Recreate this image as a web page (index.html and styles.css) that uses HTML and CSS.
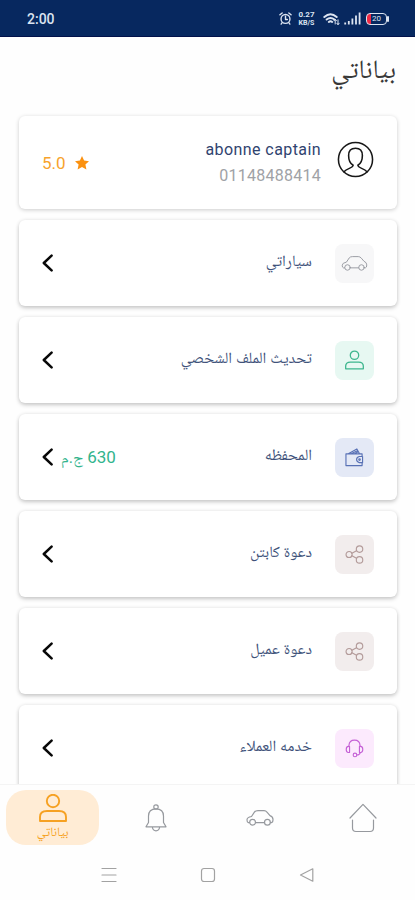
FILE: index.html
```html
<!DOCTYPE html>
<html lang="ar" dir="rtl">
<head>
<meta charset="utf-8">
<title>بياناتي</title>
<link rel="stylesheet" href="styles.css">
</head>
<body>
<svg class="defs" aria-hidden="true">
  <symbol id="car" viewBox="0 0 28 18"><path d="M3.5 13.6H2.2Q1 13.4 1 10.8Q1 8.4 5.5 7.5L8.4 3.1Q9.4 1.7 12 1.7H18Q19.8 1.7 21.2 3.3L24 6.6Q27 7.8 27 10.5Q27 13.4 25.5 13.6H24.5M9.5 13.6H18.5"/><circle cx="6.6" cy="13.2" r="2.9"/><circle cx="21.4" cy="13.2" r="2.9"/></symbol>
  <symbol id="person" viewBox="0 0 28 28"><circle cx="14" cy="7" r="6.2"/><path d="M1 27V23Q1 17 8 17H20Q27 17 27 23V27Z"/></symbol>
  <symbol id="share" viewBox="0 0 20 20"><circle cx="4.3" cy="10" r="3.2"/><circle cx="15.3" cy="4.3" r="3.4"/><circle cx="15.3" cy="15.7" r="3.4"/><path d="M7.3 8.8L12.1 6M7.3 11.2L12.1 14"/></symbol>
  <symbol id="chevron" viewBox="0 0 11 18"><path d="M9.6 1.6L1.8 9L9.6 16.4"/></symbol>
</svg>
<header class="status" dir="ltr">
  <span class="clock">2:00</span>
  <div class="indicators">
    <svg class="alarm" viewBox="0 0 14 14"><circle cx="7" cy="7.5" r="4.8"/><path d="M7 4.5V8H9M1 3L3.4 1M13 3L10.6 1M3.4 11.5L2.3 13M10.6 11.5L11.7 13"/></svg>
    <span class="speed"><b>0.27</b><b>KB/S</b></span>
    <svg class="wifi" viewBox="0 0 17 14"><path d="M1.3 5Q7.5 -.7 13.7 5M3.6 7.6Q7.5 4.4 11.4 7.6M5.8 10Q7.5 8.6 9.2 10"/><path class="fine" d="M12.2 12V7.5M10.9 8.8L12.2 7.3L13.5 8.8M15 7.8V12.5M13.8 11.2L15 12.7L16.2 11.2"/></svg>
    <svg class="signal" viewBox="0 0 17 13"><path d="M1.2 12.5V10.5M4.8 12.5V9M8.4 12.5V6.5M12 12.5V3.5M15.6 12.5V.5"/></svg>
    <span class="battery">20</span>
  </div>
</header>
<main class="screen">
  <h1 class="title">بياناتي</h1>
  <section class="cards">
    <article class="card profile">
      <svg class="avatar" viewBox="0 0 36 36"><circle cx="18" cy="18" r="16.6"/><path d="M15.7 23.6C12.6 21.7 11.3 18 11.3 14C11.3 9.6 13.8 7 18 7S24.7 9.6 24.7 14C24.7 18 23.4 21.7 20.3 23.6C20.7 26.6 26 26.3 29.2 30M15.7 23.6C15.3 26.6 10 26.3 6.8 30"/></svg>
      <div class="identity"><span class="name" dir="ltr">abonne captain</span><span class="phone" dir="ltr">01148488414</span></div>
      <div class="rating" dir="ltr"><span>5.0</span><svg viewBox="0 0 14 14"><path d="M7 0L9.1 4.6L14 5.2L10.4 8.6L11.4 13.5L7 11L2.6 13.5L3.6 8.6L0 5.2L4.9 4.6Z"/></svg></div>
    </article>
    <article class="card row">
      <span class="tile gray"><svg class="i-car"><use href="#car"/></svg></span>
      <span class="label">سياراتي</span>
      <svg class="chevron"><use href="#chevron"/></svg>
    </article>
    <article class="card row">
      <span class="tile green"><svg class="i-person"><use href="#person"/></svg></span>
      <span class="label wide">تحديث الملف الشخصي</span>
      <svg class="chevron"><use href="#chevron"/></svg>
    </article>
    <article class="card row">
      <span class="tile blue"><svg class="i-wallet" viewBox="0 0 20 20"><path d="M18 9V6.2H1V18.5H18V15.5M18.5 9H15Q12.2 9.8 12.2 12.2T15 15.4H18.5ZM3.5 6L12.5 1L15.3 6M7 5.8L13 3M10.5 5.8L13.8 4"/><circle cx="15.3" cy="12.2" r=".8"/></svg></span>
      <span class="label">المحفظه</span>
      <span class="balance"><span class="amount">630</span> ج.م</span>
      <svg class="chevron"><use href="#chevron"/></svg>
    </article>
    <article class="card row">
      <span class="tile rose"><svg class="i-share"><use href="#share"/></svg></span>
      <span class="label">دعوة كابتن</span>
      <svg class="chevron"><use href="#chevron"/></svg>
    </article>
    <article class="card row">
      <span class="tile rose"><svg class="i-share"><use href="#share"/></svg></span>
      <span class="label">دعوة عميل</span>
      <svg class="chevron"><use href="#chevron"/></svg>
    </article>
    <article class="card row">
      <span class="tile pink"><svg class="i-headset" viewBox="0 0 20 20"><path d="M4.2 8V6.5Q4.5 1.2 10 1.2T15.8 6.5V8M4.8 7.8V14.2H3.5Q1.3 14 1.3 11T3.5 7.8ZM15.2 7.8V14.2H16.5Q18.7 14 18.7 11T16.5 7.8ZM16 14.5Q15.5 16.6 12.5 16.8"/><circle cx="10.5" cy="16.8" r="1.9"/></svg></span>
      <span class="label">خدمه العملاء</span>
      <svg class="chevron"><use href="#chevron"/></svg>
    </article>
  </section>
</main>
<nav class="tabs">
  <span class="tab"><svg class="home" viewBox="0 0 28 30"><path d="M1 15L14 1.4L27 15M3.5 17V25Q3.5 28.5 7 28.5H21Q24.5 28.5 24.5 25V17"/></svg></span>
  <span class="tab"><svg class="tab-car"><use href="#car"/></svg></span>
  <span class="tab"><svg class="bell" viewBox="0 0 22 28"><path d="M1 22.8H21L18.5 18.5V12C18.5 7.5 16 4.8 11 4.8S3.5 7.5 3.5 12V18.5ZM7.3 23Q8 26.8 11 26.8T14.7 23"/><circle cx="11" cy="3" r="2.2"/></svg></span>
  <span class="tab"><span class="pill"><svg class="tab-person"><use href="#person"/></svg><span>بياناتي</span></span></span>
</nav>
<footer class="system">
  <svg viewBox="0 0 16 16"><path d="M13.8 1.8V14.2L1.5 8Z"/></svg>
  <svg viewBox="0 0 16 16"><rect x="1.5" y="1.5" width="13" height="13" rx="2.5"/></svg>
  <svg viewBox="0 0 16 16"><path d="M1 1.5H15M1 8H15M1 14.5H15"/></svg>
</footer>
</body>
</html>
```
FILE: styles.css
```css
* { box-sizing: border-box; }
body {
  margin: 0;
  height: 900px;
  overflow: hidden;
  display: flex;
  flex-direction: column;
  background: #fefefe;
  font-family: Roboto, "Noto Naskh Arabic", "Noto Sans Arabic", "DejaVu Sans", sans-serif;
}
svg { display: block; flex: none; fill: none; stroke: currentColor; stroke-width: 1.2; stroke-linejoin: round; stroke-linecap: round; }
.defs { width: 0; height: 0; position: absolute; }

.status {
  flex: none;
  height: 37px;
  padding: 0 24px 0 27px;
  display: flex;
  align-items: center;
  justify-content: space-between;
  background: #07285f;
  border-bottom: 1px solid #02114a;
  color: #dce4f1;
}
.clock { font-size: 14px; font-weight: 500; line-height: 16px; padding-top: 2px; }
.indicators { display: flex; align-items: center; padding-top: 1px; }
.alarm { width: 13px; height: 13px; margin-right: 5px; stroke-width: 1.5; }
.speed { width: 19px; margin-right: 7px; display: flex; flex-direction: column; align-items: center; font-size: 8px; line-height: 8px; }
.speed b { height: 8px; }
.speed b + b { font-size: 7px; line-height: 9px; }
.wifi { width: 17px; height: 14px; margin-right: 4px; stroke-width: 1.9; }
.wifi .fine { stroke-width: 1; }
.signal { width: 17px; height: 13px; margin-right: 5px; stroke-width: 1.8; stroke-linecap: butt; }
.battery {
  position: relative;
  width: 21px;
  height: 12px;
  margin-right: 4px;
  border: 1.5px solid #dce4f1;
  border-radius: 4px;
  background: linear-gradient(90deg, #ef2944 4px, transparent 4px);
  font-size: 8px;
  line-height: 10px;
  text-align: center;
}
.battery::after { content: ""; position: absolute; right: -3px; top: 2px; width: 2px; height: 6px; border-radius: 1px; background: #dce4f1; }

.screen { flex: 1; min-height: 0; overflow: hidden; }
.title { margin: 0; height: 79px; padding: 0 19px; line-height: 63px; font-size: 26.5px; font-weight: 400; color: #383838; }
.cards { display: flex; flex-direction: column; gap: 11px; padding: 0 18px 0 19px; }
.card {
  flex: none;
  height: 86px;
  display: flex;
  align-items: center;
  padding: 0 23px;
  border-radius: 6px;
  background: #fff;
  box-shadow: 0 2px 4px rgba(0, 0, 0, .2), 0 0 4px rgba(0, 0, 0, .07);
}
.profile { height: 93px; box-shadow: 0 1px 4px rgba(0, 0, 0, .2); }
.avatar { width: 37px; height: 37px; margin-top: -7px; stroke-width: 1.5; color: #171717; }
.identity { margin-right: 16px; display: flex; flex-direction: column; align-items: flex-start; }
.name { font-size: 16px; line-height: 26px; letter-spacing: .42px; color: #30436f; }
.phone { font-size: 16px; line-height: 26px; letter-spacing: .25px; color: #a0a2a6; }
.rating { margin-right: auto; display: flex; align-items: center; gap: 9px; color: #f7a32c; font-size: 17px; }
.rating svg { width: 14px; height: 14px; fill: #fb9110; stroke: none; }

.tile { flex: none; width: 39px; height: 39px; border-radius: 8px; display: flex; align-items: center; justify-content: center; }
.gray { background: #f7f7f8; color: #9799a0; }
.green { background: #e7f8f2; color: #3eb68e; }
.blue { background: #e4e9f6; color: #5871b5; }
.rose { background: #f2eded; color: #b39b9a; }
.pink { background: #fceafd; color: #c562d6; }
.i-car { width: 27px; height: 17px; stroke-width: 1; }
.i-person { width: 19px; height: 20px; stroke-width: 1.9; }
.i-wallet, .i-share, .i-headset { width: 19px; height: 19px; }
.label { margin-right: 23px; padding-bottom: 4px; font-size: 15.8px; line-height: 30px; color: #40527a; white-space: nowrap; }
.chevron { width: 11px; height: 18px; margin-right: auto; stroke-width: 2.5; color: #080808; }
.balance { margin-right: auto; font-size: 16px; line-height: 30px; color: #32b48d; }
.amount { font-size: 17px; letter-spacing: .3px; }
.balance + .chevron { margin-right: 8px; }

.tabs { flex: none; height: 66px; display: flex; background: #fefefe; border-top: 1px solid #f4f4f4; }
.tab { flex: 1; display: flex; align-items: center; justify-content: center; color: #96999e; }
.home { width: 28px; height: 30px; }
.tab-car { width: 28px; height: 18px; }
.bell { width: 22px; height: 28px; }
.pill { width: 93px; height: 55px; border-radius: 20px; background: #ffecd5; color: #f6a122; display: flex; flex-direction: column; align-items: center; padding-top: 4px; font-size: 13px; line-height: 19px; }
.tab:last-child { padding-left: 1px; }
.tab-person { width: 28px; height: 28px; stroke-width: 1.9; }

.system { flex: none; height: 50px; display: flex; justify-content: center; align-items: center; gap: 83px; color: #a2a2a2; }
.system svg { width: 16px; height: 16px; }
```
